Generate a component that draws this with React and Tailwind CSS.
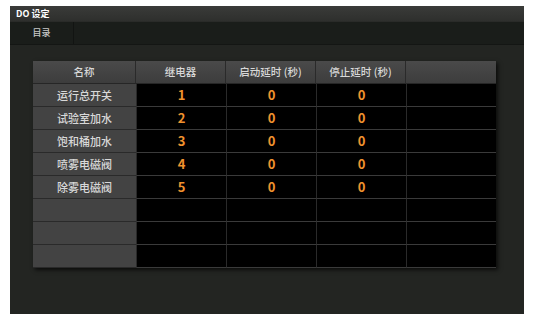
const rows = [
  { name: "运行总开关", relay: "1", start: "0", stop: "0" },
  { name: "试验室加水", relay: "2", start: "0", stop: "0" },
  { name: "饱和桶加水", relay: "3", start: "0", stop: "0" },
  { name: "喷雾电磁阀", relay: "4", start: "0", stop: "0" },
  { name: "除雾电磁阀", relay: "5", start: "0", stop: "0" },
  { name: "", relay: "", start: "", stop: "" },
  { name: "", relay: "", start: "", stop: "" },
  { name: "", relay: "", start: "", stop: "" },
];

const headers = ["名称", "继电器", "启动延时 (秒)", "停止延时 (秒)", ""];

export default function App() {
  return (
    <div
      className="min-h-screen bg-white pl-[10px] pt-[6px]"
      style={{
        fontFamily:
          '"Noto Sans CJK SC", "Noto Sans", "Liberation Sans", sans-serif',
      }}
    >
      <div className="flex h-[308px] w-[514px] flex-col bg-[#232522]">
        <div className="flex h-[16px] items-center border-b border-[#2a2b29] bg-gradient-to-b from-[#3a3b39] to-[#2e2f2d] pl-[6px] text-[9px] font-bold leading-none text-white">
          DO 设定
        </div>

        <div className="flex h-[23px] border-b border-[#141614] bg-[#1a1d1a]">
          <div className="flex w-[64px] items-center justify-center border-r border-[#121412] text-[9px] font-medium text-[#c8c8c8]">
            目录
          </div>
        </div>

        <div className="ml-[23px] mt-[16px] w-[463px] shadow-[2px_2px_4px_rgba(0,0,0,0.7)]">
          <div className="grid h-[23px] grid-cols-[103px_90px_90px_90px_90px] bg-gradient-to-b from-[#4a4a4a] to-[#3c3c3c] text-[10.5px] font-medium text-[#d8d8d8]">
            {headers.map((h, i) => (
              <div
                key={i}
                className="flex items-center justify-center border-r border-[#2a2a2a] border-b border-b-[#262626] last:border-r-0"
              >
                {h}
              </div>
            ))}
          </div>

          {rows.map((r, i) => (
            <div
              key={i}
              className="grid h-[23px] grid-cols-[103px_90px_90px_90px_90px]"
            >
              <div className="flex items-center justify-center border-b border-[#2a2a2a] bg-[#434343] text-[11px] font-medium text-[#d8d8d8]">
                {r.name}
              </div>
              {[r.relay, r.start, r.stop, ""].map((v, j) => (
                <div
                  key={j}
                  className="flex items-center justify-center border-l border-[#2a2a2a] border-b border-b-[#3a3a3a] bg-black text-[13px] font-bold text-[#f0922e]"
                >
                  {v}
                </div>
              ))}
            </div>
          ))}
        </div>
      </div>
    </div>
  );
}
